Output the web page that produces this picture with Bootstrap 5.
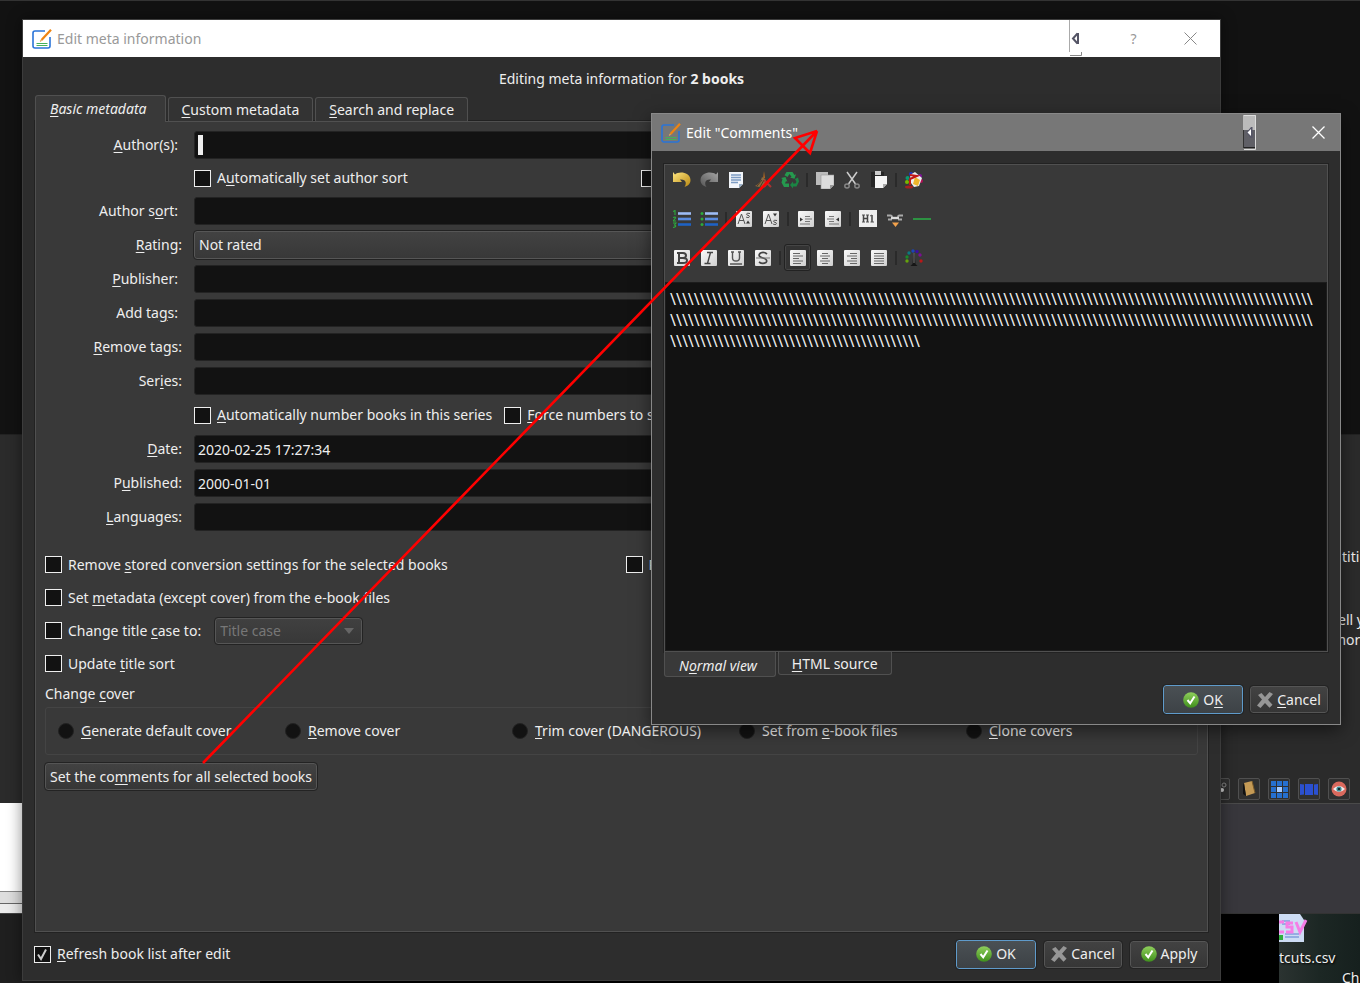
<!DOCTYPE html>
<html lang="en" data-bs-theme="dark">
<head>
<meta charset="utf-8">
<meta name="viewport" content="width=device-width, initial-scale=1">
<title>Edit meta information</title>
<link href="https://cdn.jsdelivr.net/npm/bootstrap@5.3.0/dist/css/bootstrap.min.css" rel="stylesheet">
<style>
body{font-family:"Noto Sans","Open Sans",sans-serif;font-size:14px;line-height:20px;color:#eee;background:#121212}
u{text-underline-offset:2px}
.desktop{min-height:100vh;background:#121212}
/* windows behind the dialogs */
.behind-left{width:260px}
.behind-right{width:140px}
.behind-left>*,.behind-right>*{flex-shrink:0}
.bg-top{height:433px;background:#121212}
.bg-dark-pane{background:#2b2b2b;border-top:1px solid #222}
.bg-left-pane{height:369px}
.bg-white-pane{height:88px;background:#fff}
.bg-strip1{height:13px;background:#dedede;border-top:1px solid #888;border-bottom:1px solid #666}
.bg-strip2{height:9px;background:#ececec}
.bg-foot{background:#1f1f1f;border-top:1px solid #444}
.bg-right-pane{height:370px;border-bottom:1px solid #4a4a4a;padding-top:112px;white-space:nowrap;overflow:hidden}
.bg-right-pane p{margin:0;text-align:left}
.line-a{padding-left:122px;margin-bottom:43px!important}
.line-b{padding-left:118px}
.line-c{padding-left:113px}
.bg-tools{margin-top:128px;gap:8px;margin-left:-12px}
.tiny-tool{width:22px;height:22px;padding:0;border:1px solid #505050;border-radius:2px;background:#303030;display:flex;align-items:center;justify-content:center;flex:none}
.bg-violet{height:109px;background:#38373c}
.bg-black{background:#000;border-top:1px solid #333}
.wallpaper{margin-left:59px;background:linear-gradient(90deg,#2b3331,#1c2724 50%,#16201e);height:100%;overflow:hidden;white-space:nowrap;text-shadow:1px 1px 2px #000}
.file-name{margin-top:4px}
.file-next{padding-left:63px}
/* windows */
.win{background:#2d2d2d;display:flex;flex-direction:column}
.win-main{left:22px;right:139px;top:19px;bottom:2px;border:1px solid #3c3c3c;box-shadow:0 0 14px rgba(0,0,0,.45)}
.win-dialog{left:651px;right:19px;top:113px;border:1px solid #888;box-shadow:0 5px 16px rgba(0,0,0,.5)}
.titlebar{height:37px;padding-left:9px;padding-right:1px;font-size:14px}
.title-name{margin-left:5px}
.title-main{background:#fff;color:#999}
.title-dialog{background:#777;color:#fff;height:37px}
.title-btn{width:57px;height:100%;padding:0;border:0;background:none;color:inherit;display:flex;align-items:center;justify-content:center}
.title-dialog .title-btn{width:41px}
.title-gap{width:22px}
.title-gap-d{width:41px}
.heading{height:38px;padding-top:12px;text-align:center}
.tab-strip{padding-left:12px;gap:2px;z-index:1}
.tabb{border:1px solid #505050;border-radius:3px 3px 0 0;border-bottom:0;background:#333;color:#eee;padding:0 13px;height:24px;line-height:22px}
.tabb.on{background:#393939;height:27px;font-style:italic;margin-bottom:-1px;line-height:24px;padding:0 18px 0 14px;z-index:1;position:relative}
.panel{margin:0 12px;border:1px solid #505050;background:#393939;padding:9px;flex:1;outline:1px solid #222}
.fields{display:flex;flex-direction:column;gap:6px;padding-right:118px}
.frow{display:grid;grid-template-columns:137px minmax(0,1fr);column-gap:12px;align-items:center;min-height:28px}
.frow-low{min-height:26px}
.frow label.cap{text-align:right}
.cap-in{padding-right:4px}
.box{height:28px;border:1px solid #232323;border-radius:3px;background:#121212;color:#eee;padding:0 3px;width:100%;outline:0}
.caret-box{height:28px;border:1px solid #232323;border-radius:3px;background:linear-gradient(#eee,#eee) 3px 3px/5px 20px no-repeat #121212;width:100%;outline:0}
.combo{height:28px;border:1px solid #565656;border-radius:3px;background:linear-gradient(#424242,#383838);color:#eee;padding:0 4px;width:100%;appearance:none;outline:1px solid #232323}
.halves{display:grid;grid-template-columns:1fr 1fr;gap:8px}
.tick{display:flex;align-items:center;gap:6px;white-space:nowrap}
.tick input{appearance:none;width:17px;height:17px;border:1px solid #eee;background:#121212;margin:0;flex:none}
.tick input:checked{background:#121212 url("data:image/svg+xml,%3Csvg xmlns='http://www.w3.org/2000/svg' viewBox='0 0 15 15'%3E%3Cpath d='M3 7.5l3 4.5 5-9.500' fill='none' stroke='%23ccc' stroke-width='2'/%3E%3C/svg%3E") center/15px no-repeat}
.options{margin-top:17px}
.opt-row{height:33px}
.title-case{width:147px;height:26px;color:#777;padding:0 4px;margin-left:14px;background:url("data:image/svg+xml,%3Csvg xmlns='http://www.w3.org/2000/svg' viewBox='0 0 10 6'%3E%3Cpath d='M0 0h10L5 6z' fill='%23666'/%3E%3C/svg%3E") right 7px center/10px 6px no-repeat,linear-gradient(#404040,#383838);opacity:1}
.cover-box{border:1px solid #444;border-radius:3px;margin:3px 0 8px;padding:0 4px 0 12px;height:48px;display:grid;grid-template-columns:repeat(5,1fr);align-items:center}
.cover-box .tick{gap:7px}
.cover-box .tick input{width:16px;height:16px;border:1px solid #222;border-radius:50%}
.push{border:1px solid #555;border-radius:3px;outline:1px solid #232323;background:linear-gradient(#424242,#363636);color:#eee;height:27px;padding:0 4px;display:inline-flex;align-items:center;justify-content:center;gap:4px;white-space:nowrap}
.push-wide{min-width:78px}
.push.primary{border-color:#5f9bcb;background:linear-gradient(#4a5054,#3d4246);min-width:80px;height:29px}
.foot{padding:0 12px 4px;height:48px;gap:8px}
.foot .tick{gap:6px;margin-left:-1px}
/* comments editor */
.ed{margin:13px 12px 0;border:1px solid #505050;outline:1px solid #222;background:#393939}
.tools{padding:0 3px 5px}
.tool-row{display:flex;height:39px;align-items:center}
.tool-row:first-child{height:30px;margin-bottom:4px}
.tool{width:27px;height:27px;padding:0;border:1px solid transparent;background:none;display:flex;align-items:center;justify-content:center;border-radius:3px;flex:none}
.tool.on{border-color:#222;background:#333;box-shadow:inset 0 0 0 1px #454545}
.tsep{width:8px;height:14px;background:linear-gradient(#2a2a2a,#2a2a2a) center/2px 100% no-repeat;flex:none}
.text-area{display:block;width:100%;height:369px;border:1px solid #1c1c1c;background:#121212;color:#eee;resize:none;padding:6px 4px;font-size:16px;line-height:21px;overflow:hidden;outline:0;white-space:pre}
.low-tabs{padding-left:12px;gap:2px;height:26px;align-items:flex-start}
.low-tab{border:1px solid #505050;border-top:0;border-radius:0 0 3px 3px;background:#333;color:#eee;height:23px;padding:0 13px;line-height:24px}
.low-tab.on{background:#393939;height:25px;font-style:italic;padding:0 18px 0 14px;line-height:27px}
.dlg-foot{padding:7px 12px 10px;gap:7px}
.arrow-layer{left:0;top:0;pointer-events:none;z-index:5}
</style>
</head>
<body>
<svg width="0" height="0" class="position-absolute" aria-hidden="true">
<defs>
<linearGradient id="gGreen" x1="0" y1="0" x2="0" y2="1"><stop offset="0" stop-color="#8fcf5c"/><stop offset="1" stop-color="#3f8f1c"/></linearGradient>
<linearGradient id="gPaper" x1="0" y1="0" x2="1" y2="1"><stop offset="0" stop-color="#fafafa"/><stop offset="1" stop-color="#cfcfcf"/></linearGradient>
<linearGradient id="gGold" x1="0" y1="0" x2="1" y2="1"><stop offset="0" stop-color="#ffe680"/><stop offset="1" stop-color="#b88710"/></linearGradient>
<linearGradient id="gGray" x1="1" y1="0" x2="0" y2="1"><stop offset="0" stop-color="#a5a5a5"/><stop offset="1" stop-color="#555"/></linearGradient>
<symbol id="i-edit" viewBox="0 0 20 20"><path d="M13 2H3Q1 2 1 4v13q0 2 2 2h13q2 0 2-2V8" fill="none" stroke="#2a74d8" stroke-width="1.600"/><path d="M4.500 14.500h11M4.500 16.500h11" stroke="#45b05a" stroke-width="1"/><path d="M19 .8L9.500 11" stroke="#ee8412" stroke-width="2.200"/><path d="M9.500 11l-1.300 1.500" stroke="#dba55e" stroke-width="1.200"/></symbol>
<symbol id="i-ok" viewBox="0 0 16 16"><circle cx="8" cy="8" r="7.800" fill="url(#gGreen)"/><path d="M4.500 8l2.700 3.300L11.500 4.500" fill="none" stroke="#fff" stroke-width="2"/></symbol>
<symbol id="i-no" viewBox="0 0 16 16"><path d="M1 3l3.500-2L8 5l4.500-5L16 2l-5 5.700 4.500 5-3 3L8 11l-4.500 5L0 13.500l5-6z" fill="#969696"/></symbol>
<symbol id="i-sheet" viewBox="0 0 18 18"><rect x="1" y="1" width="16" height="16" rx="1" fill="url(#gPaper)"/></symbol>
</defs>
</svg>

<div class="desktop position-relative overflow-hidden">
  <div class="position-absolute top-0 start-0 w-100 h-100 d-flex justify-content-between bg-black">
    <div class="behind-left d-flex flex-column">
      <div class="bg-top"></div>
      <div class="bg-dark-pane bg-left-pane"></div>
      <div class="bg-white-pane"></div><div class="bg-strip1"></div><div class="bg-strip2"></div>
      <div class="bg-foot flex-grow-1"></div>
    </div>
    <div class="bg-top flex-grow-1"></div>
    <div class="behind-right d-flex flex-column">
      <div class="bg-top"></div>
      <div class="bg-dark-pane bg-right-pane">
        <p class="line-a">titi</p><p class="line-b">ell y</p><p class="line-c">mor</p>
        <div class="bg-tools d-flex">
          <button class="tiny-tool" aria-label="Link"><svg width="18" height="18"><circle cx="14" cy="5" r="2" fill="none" stroke="#888"/><circle cx="12" cy="10" r="2" fill="#ccc"/></svg></button>
          <button class="tiny-tool" aria-label="Book"><svg width="16" height="18"><path d="M3 3l8-2 3 12-9 3z" fill="#c49a55"/><path d="M3 3l2 13-3-2V5z" fill="#111"/><path d="M11 1l3 12" stroke="#7a5a28"/></svg></button>
          <button class="tiny-tool" aria-label="Grid"><svg width="17" height="17"><path d="M0 0h5v5H0zM6 0h5v5H6zM12 0h5v5h-5zM0 6h5v5H0zM12 6h5v5h-5zM0 12h5v5H0zM6 12h5v5H6zM12 12h5v5h-5z" fill="#2670cf"/><path d="M6 6h5v5H6z" fill="#a5cbff"/></svg></button>
          <button class="tiny-tool" aria-label="Shelf"><svg width="18" height="12"><path d="M0 1l4 .5v10L0 12zM5 1h8v11H5zM18 1l-4 .5v10l4 .5z" fill="#2b50d0"/></svg></button>
          <button class="tiny-tool" aria-label="Preview"><svg width="16" height="16"><circle cx="8" cy="8" r="7.500" fill="#d9695d"/><path d="M2 8q6-6 12 0-6 6-12 0" fill="#eee"/><circle cx="8" cy="8" r="2.600" fill="#3b8b94"/><circle cx="8" cy="8" r="1.100" fill="#111"/></svg></button>
        </div>
      </div>
      <div class="bg-violet"></div>
      <div class="bg-black flex-grow-1">
        <div class="wallpaper">
          <svg width="32" height="30" class="d-block" aria-hidden="true"><path d="M0 0h21l4 6v22H0z" fill="#cddcf4"/><path d="M3 7h8M3 10h8M6 20h14M6 23h14" stroke="#5b7fd0"/><path d="M0 21h4v5H0z" fill="#2fae3c"/><path d="M5 8H0M0 18h5M14 9H8v4h5v5H7M17 8l4 10 6-12" fill="none" stroke="#f57de6" stroke-width="3"/></svg>
          <div class="file-name">tcuts.csv</div>
          <div class="file-next">Ch</div>
        </div>
      </div>
    </div>
  </div>

  <main class="win win-main position-absolute">
    <div class="titlebar title-main d-flex align-items-center">
      <svg width="20" height="20"><use href="#i-edit"/></svg>
      <span class="title-name me-auto">Edit meta information</span>
      <svg width="14" height="37" aria-hidden="true"><path d="M.5 0v32" stroke="#aaa"/><path d="M1 35.500h11.500V32" fill="none" stroke="#888"/><path d="M9 13v11M8.500 13.500L4 18.500l4.500 5" fill="none" stroke="#556" stroke-width="2"/></svg>
      <span class="title-gap"></span>
      <button class="title-btn" aria-label="Help">?</button>
      <button class="title-btn" aria-label="Close"><svg width="13" height="13"><path d="M.5.5l12 12M12.500.5l-12 12" stroke="#888"/></svg></button>
    </div>
    <div class="heading">Editing meta information for <b>2 books</b></div>
    <div class="tab-strip d-flex align-items-end" role="tablist">
      <button class="tabb on" role="tab"><u>B</u>asic metadata</button>
      <button class="tabb" role="tab"><u>C</u>ustom metadata</button>
      <button class="tabb" role="tab"><u>S</u>earch and replace</button>
    </div>
    <div class="panel">
      <div class="fields">
        <div class="frow"><label class="cap cap-in" for="f1"><u>A</u>uthor(s):</label><input class="caret-box" id="f1"></div>
        <div class="frow frow-low"><span></span><div class="halves"><label class="tick"><input type="checkbox"><span>A<u>u</u>tomatically set author sort</span></label><label class="tick"><input type="checkbox"><span>Swap title and author</span></label></div></div>
        <div class="frow"><label class="cap cap-in" for="f2">Author s<u>o</u>rt:</label><input class="box" id="f2"></div>
        <div class="frow"><label class="cap" for="f3"><u>R</u>ating:</label><select class="combo" id="f3"><option>Not rated</option></select></div>
        <div class="frow"><label class="cap cap-in" for="f4"><u>P</u>ublisher:</label><input class="box" id="f4"></div>
        <div class="frow"><label class="cap cap-in" for="f5">Add ta<u>g</u>s:</label><input class="box" id="f5"></div>
        <div class="frow"><label class="cap" for="f6"><u>R</u>emove tags:</label><input class="box" id="f6"></div>
        <div class="frow"><label class="cap" for="f7">Ser<u>i</u>es:</label><input class="box" id="f7"></div>
        <div class="frow"><span></span><div class="d-flex gap-2"><label class="tick me-1"><input type="checkbox"><span><u>A</u>utomatically number books in this series</span></label><label class="tick"><input type="checkbox"><span><u>F</u>orce numbers to start with</span></label></div></div>
        <div class="frow"><label class="cap" for="f8"><u>D</u>ate:</label><input class="box" id="f8" value="2020-02-25 17:27:34"></div>
        <div class="frow"><label class="cap" for="f9">P<u>u</u>blished:</label><input class="box" id="f9" value="2000-01-01"></div>
        <div class="frow"><label class="cap" for="f10"><u>L</u>anguages:</label><input class="box" id="f10"></div>
      </div>
      <div class="options">
        <div class="halves opt-row"><label class="tick"><input type="checkbox"><span>Remove <u>s</u>tored conversion settings for the selected books</span></label><label class="tick"><input type="checkbox"><span>Restore pre conversion originals</span></label></div>
        <label class="tick opt-row"><input type="checkbox"><span>Set <u>m</u>etadata (except cover) from the e-book files</span></label>
        <div class="d-flex align-items-center opt-row"><label class="tick"><input type="checkbox"><span>Change title <u>c</u>ase to:</span></label><select class="combo title-case" disabled aria-label="Title case"><option>Title case</option></select></div>
        <label class="tick opt-row"><input type="checkbox"><span>Update <u>t</u>itle sort</span></label>
      </div>
      <div class="mt-1">Change <u>c</u>over</div>
      <div class="cover-box">
        <label class="tick"><input type="radio" name="cover"><span><u>G</u>enerate default cover</span></label>
        <label class="tick"><input type="radio" name="cover"><span><u>R</u>emove cover</span></label>
        <label class="tick"><input type="radio" name="cover"><span><u>T</u>rim cover (DANGEROUS)</span></label>
        <label class="tick"><input type="radio" name="cover"><span>Set from <u>e</u>-book files</span></label>
        <label class="tick"><input type="radio" name="cover"><span><u>C</u>lone covers</span></label>
      </div>
      <button class="push"><span>Set the co<u>m</u>ments for all selected books</span></button>
    </div>
    <div class="foot d-flex align-items-center">
      <label class="tick me-auto"><input type="checkbox" checked><span><u>R</u>efresh book list after edit</span></label>
      <button class="push primary"><svg width="16" height="16"><use href="#i-ok"/></svg>OK</button>
      <button class="push push-wide"><svg width="16" height="16"><use href="#i-no"/></svg>Cancel</button>
      <button class="push push-wide"><svg width="16" height="16"><use href="#i-ok"/></svg>Apply</button>
    </div>
  </main>

  <section class="win win-dialog position-absolute">
    <div class="titlebar title-dialog d-flex align-items-center">
      <svg width="20" height="20"><use href="#i-edit"/></svg>
      <span class="title-name me-auto">Edit "Comments"</span>
      <svg width="14" height="37" aria-hidden="true"><rect x="0" y="1" width="13" height="15" fill="#bbb"/><rect x="0" y="16" width="13" height="17" fill="#5f5f66"/><path d="M1 1.500h11.500V35.500H1" fill="none" stroke="#ddd"/><path d="M0 33.500h12" stroke="#222"/><path d="M.5 16v18" stroke="#333"/><path d="M9.500 13v11h-2L3.500 18.500 8 13z" fill="#556"/><path d="M8 15v7l-3.500-3.500z" fill="#fff"/></svg>
      <span class="title-gap-d"></span>
      <button class="title-btn" aria-label="Close"><svg width="13" height="13"><path d="M.5.5l12 12M12.500.5l-12 12" stroke="#fff" stroke-width="1.300"/></svg></button>
    </div>
    <div class="ed">
      <div class="tools">
        <div class="tool-row">
          <button class="tool" aria-label="Undo"><svg width="18" height="18"><path d="M0 1l2 2.500C6 0 17 1 17.500 9c0 4-3 6-6 7 2-3 2.500-8-4.500-7.500L9 11H0z" fill="url(#gGold)"/></svg></button>
          <button class="tool" aria-label="Redo"><svg width="18" height="18"><path d="M18 1l-2 2.500C12 0 1 1 .5 9c0 4 3 6 6 7-2-3-2.500-8 4.500-7.500L9 11h9z" fill="url(#gGray)"/></svg></button>
          <button class="tool" aria-label="Select all"><svg width="18" height="18"><path d="M2 1h14v12l-4 4H2z" fill="#f2f5fa"/><path d="M4 4h10M4 6.500h10M4 9h10M4 11.500h7" stroke="#7d9cc4" stroke-width="1.400"/><path d="M12 17v-4h4z" fill="#9ab0c8"/></svg></button>
          <button class="tool" aria-label="Remove formatting"><svg width="18" height="18"><path d="M10 0l1 7-2 1z" fill="#b06820"/><path d="M8 6l4 3-3 8-8-2c4-2 6-5 7-9z" fill="#8a6a42"/><path d="M3 15l5-6M6 16l4-7" stroke="#4b3921"/><path d="M10 9l7 7M17 8l-7 8" stroke="#a33" stroke-width="2"/></svg></button>
          <button class="tool" aria-label="Clear"><svg width="18" height="18"><path d="M5.500 1h6l2 3 1.500-.7-1.500 4.500-4.500-1.300 1.500-.8L8.500 3 6.500 6 3.500 4.300z" fill="#25994e"/><path d="M14 8l3-1.500 1 4-2.500 5H12v2l-3-3.500L12 10.500v2h2.500l1-1.500z" fill="#1b8544"/><path d="M0 7l4.500-1L6.500 11 5 10l-1 2.500h4v3.500H3L.500 11.500 1.500 8z" fill="#25994e"/></svg></button>
          <span class="tsep"></span>
          <button class="tool" aria-label="Copy"><svg width="18" height="18"><path d="M0 1h12v13H0z" fill="#bcbcbc"/><path d="M5 4h13v10l-4 4H5z" fill="#ddd" stroke="#999" stroke-width=".6"/><path d="M14 18v-4h4z" fill="#999"/></svg></button>
          <button class="tool" aria-label="Cut"><svg width="18" height="18" fill="none"><path d="M4 1l8.500 12M14 1L5.500 13" stroke="#ccc" stroke-width="1.500"/><ellipse cx="4" cy="15" rx="2.200" ry="2" stroke="#888" stroke-width="1.400"/><ellipse cx="14" cy="15" rx="2.200" ry="2" stroke="#888" stroke-width="1.400"/></svg></button>
          <button class="tool" aria-label="Paste"><svg width="18" height="18"><path d="M1 1h13v15H1z" fill="#252525"/><path d="M5 0h6v4H5z" fill="#ccc"/><path d="M5 5h12v8l-4 4H5z" fill="#f5f5f5"/><path d="M13 17v-4h4z" fill="#aaa"/></svg></button>
          <span class="tsep"></span>
          <button class="tool" aria-label="Background color"><svg width="18" height="18"><circle cx="2" cy="11" r="2" fill="#79b800"/><circle cx="2.500" cy="7" r="2" fill="#0a9a70"/><circle cx="6" cy="3" r="2" fill="#2338c8"/><circle cx="15" cy="5" r="2" fill="#8012a0"/><circle cx="16" cy="10" r="2" fill="#b00f55"/><path d="M5 4l5-3 7 6-3 8-5 1-3-4z" fill="#eee"/><path d="M10 6l5 3-2 6-5-2z" fill="#eeb52b"/><path d="M5 4l7 1-7 3v6" fill="none" stroke="#c01717" stroke-width="2"/><ellipse cx="4" cy="16" rx="4" ry="1.500" fill="#a82020"/></svg></button>
        </div>
        <div class="tool-row">
          <button class="tool" aria-label="Ordered list"><svg width="18" height="18"><path d="M5 3.500h13" stroke="#9dbcf5" stroke-width="2.600"/><path d="M5 9h13" stroke="#5b8ce0" stroke-width="2.600"/><path d="M5 14.500h13" stroke="#1e62c4" stroke-width="2.600"/><path d="M0 1.500L2 .5V5M0 7.500q3-1 2.500.5L0 11h3M0 13h3l-1.500 2q3 1.500-1.500 2.500" fill="none" stroke="#2cab3c" stroke-width="1.100"/></svg></button>
          <button class="tool" aria-label="Unordered list"><svg width="18" height="18"><path d="M5 3.500h13" stroke="#9dbcf5" stroke-width="2.600"/><path d="M5 9h13" stroke="#5b8ce0" stroke-width="2.600"/><path d="M5 14.500h13" stroke="#1e62c4" stroke-width="2.600"/><g fill="#2cab3c"><circle cx="2" cy="3.500" r="1.500"/><circle cx="2" cy="9" r="1.500"/><circle cx="2" cy="14.500" r="1.500"/></g></svg></button>
          <span class="tsep"></span>
          <button class="tool" aria-label="Superscript"><svg width="18" height="18"><use href="#i-sheet"/><path d="M3 14L6.500 4 10 14M4 10.500h5M15 3.500q-3.500-1-3.500.7c0 1.500 3 .8 3 2.300 0 1.500-3 1-3.500.5" fill="none" stroke="#555"/><path d="M13 10.500l2 3h-4z" fill="#333"/></svg></button>
          <button class="tool" aria-label="Subscript"><svg width="18" height="18"><use href="#i-sheet"/><path d="M3 14L6.500 4 10 14M4 10.500h5M15 10.500q-3.500-1-3.500.7c0 1.500 3 .8 3 2.300 0 1.500-3 1-3.500.5" fill="none" stroke="#555"/><path d="M13 6.500l2-3h-4z" fill="#333"/></svg></button>
          <span class="tsep"></span>
          <button class="tool" aria-label="Indent"><svg width="18" height="18"><use href="#i-sheet"/><path d="M8 6.500h5M8 9h7M8 11.500h5M3 14h10" stroke="#777"/><path d="M3 7.500L6 9.500 3 11.500z" fill="#333"/></svg></button>
          <button class="tool" aria-label="Outdent"><svg width="18" height="18"><use href="#i-sheet"/><path d="M5 6.500h5M3 9h7M5 11.500h5M5 14h10" stroke="#777"/><path d="M15 7.500L12 9.500l3 2z" fill="#333"/></svg></button>
          <span class="tsep"></span>
          <button class="tool" aria-label="Heading style"><svg width="18" height="18"><rect x="0" y="0" width="18" height="17" fill="#eee"/><path d="M4.500 5v7M8.500 5v7M4.500 8.500h4M13 5v7" stroke="#444" stroke-width="1.500" fill="none"/><path d="M3 5h3M7 5h3M3 12h3M7 12h3M11.500 12h3.500M11 6l2-1" stroke="#555"/></svg></button>
          <button class="tool" aria-label="Insert link"><svg width="18" height="18" fill="none"><path d="M1 5.500h3.500q1.500 0 1.500 1.500M17 5.500h-3.500q-1.500 0-1.500 1.500M2 9.500h4M12 9.500h4" stroke="#aaa" stroke-width="1.800"/><path d="M5 8h8" stroke="#ddd" stroke-width="2.400"/><path d="M6 12.500h7L9.500 17z" fill="#f3a24c"/></svg></button>
          <button class="tool" aria-label="Insert separator"><svg width="18" height="18"><path d="M0 9h18" stroke="#2d9242" stroke-width="2"/></svg></button>
        </div>
        <div class="tool-row">
          <button class="tool" aria-label="Bold"><svg width="18" height="18"><use href="#i-sheet"/><path d="M6 4v10M4 4h6q3 0 3 2.500T10 9H6m4 0q4 0 4 2.500T10 14H4" fill="none" stroke="#444" stroke-width="2"/></svg></button>
          <button class="tool" aria-label="Italic"><svg width="18" height="18"><use href="#i-sheet"/><path d="M7 3.500h6M4.500 14.500h6M10.500 3.500l-3 11" fill="none" stroke="#444" stroke-width="1.400"/></svg></button>
          <button class="tool" aria-label="Underline"><svg width="18" height="18"><use href="#i-sheet"/><path d="M5.500 3v6q0 3 3.500 3t3.500-3V3M4 3h3M11 3h3M3 15h12" fill="none" stroke="#555" stroke-width="1.400"/></svg></button>
          <button class="tool" aria-label="Strikethrough"><svg width="18" height="18"><use href="#i-sheet"/><path d="M13 5q-3-2.500-6.500-1C3 7 7 8.500 9 9s5 2 3 4.500q-3.500 2-7-.5" fill="none" stroke="#444" stroke-width="1.700"/><path d="M2 9h14" stroke="#777"/></svg></button>
          <span class="tsep"></span>
          <button class="tool on" aria-label="Align left"><svg width="18" height="18"><use href="#i-sheet"/><path d="M4 4.500h7M4 7h10M4 9.500h6M4 12h10M4 14.500h8" stroke="#666"/></svg></button>
          <button class="tool" aria-label="Align center"><svg width="18" height="18"><use href="#i-sheet"/><path d="M6 4.500h6M4 7h10M6 9.500h6M4 12h10M6 14.500h6" stroke="#666"/></svg></button>
          <button class="tool" aria-label="Align right"><svg width="18" height="18"><use href="#i-sheet"/><path d="M7 4.500h7M4 7h10M8 9.500h6M4 12h10M7 14.500h7" stroke="#666"/></svg></button>
          <button class="tool" aria-label="Justify"><svg width="18" height="18"><use href="#i-sheet"/><path d="M4 4.500h10M4 7h10M4 9.500h10M4 12h10M4 14.500h10" stroke="#666"/></svg></button>
          <span class="tsep"></span>
          <button class="tool" aria-label="Text color"><svg width="18" height="18"><circle cx="2" cy="12" r="1.700" fill="#65a30d"/><circle cx="2" cy="8" r="1.700" fill="#1a8a2a"/><circle cx="4" cy="4" r="1.700" fill="#0b7a80"/><circle cx="8" cy="2" r="1.700" fill="#1b44b8"/><circle cx="12" cy="2.500" r="1.700" fill="#3a10a0"/><circle cx="15" cy="6" r="1.700" fill="#7c0f93"/><circle cx="16" cy="12" r="1.700" fill="#b81818"/><path d="M8.500 4h1l1 11 2 2h-7l2-2z" fill="#161616"/><path d="M9 4v10" stroke="#777"/></svg></button>
        </div>
      </div>
      <textarea class="text-area" aria-label="Comments" spellcheck="false">\\\\\\\\\\\\\\\\\\\\\\\\\\\\\\\\\\\\\\\\\\\\\\\\\\\\\\\\\\\\\\\\\\\\\\\\\\\\\\\\\\\\\\\\\\\\\\\\\\\\\\\\\\\\
\\\\\\\\\\\\\\\\\\\\\\\\\\\\\\\\\\\\\\\\\\\\\\\\\\\\\\\\\\\\\\\\\\\\\\\\\\\\\\\\\\\\\\\\\\\\\\\\\\\\\\\\\\\\
\\\\\\\\\\\\\\\\\\\\\\\\\\\\\\\\\\\\\\\\\\</textarea>
    </div>
    <div class="low-tabs d-flex" role="tablist">
      <button class="low-tab on" role="tab">N<u>o</u>rmal view</button>
      <button class="low-tab" role="tab"><u>H</u>TML source</button>
    </div>
    <div class="dlg-foot d-flex justify-content-end align-items-center">
      <button class="push primary"><svg width="16" height="16"><use href="#i-ok"/></svg><span>O<u>K</u></span></button>
      <button class="push push-wide"><svg width="16" height="16"><use href="#i-no"/></svg><span><u>C</u>ancel</span></button>
    </div>
  </section>

  <svg class="arrow-layer position-absolute w-100 h-100" aria-hidden="true"><path d="M203 763L817 131L795 138L810 153L817 131" fill="none" stroke="#f00" stroke-width="2.600"/></svg>
</div>
<script src="https://cdn.jsdelivr.net/npm/bootstrap@5.3.0/dist/js/bootstrap.bundle.min.js"></script>
</body>
</html>
